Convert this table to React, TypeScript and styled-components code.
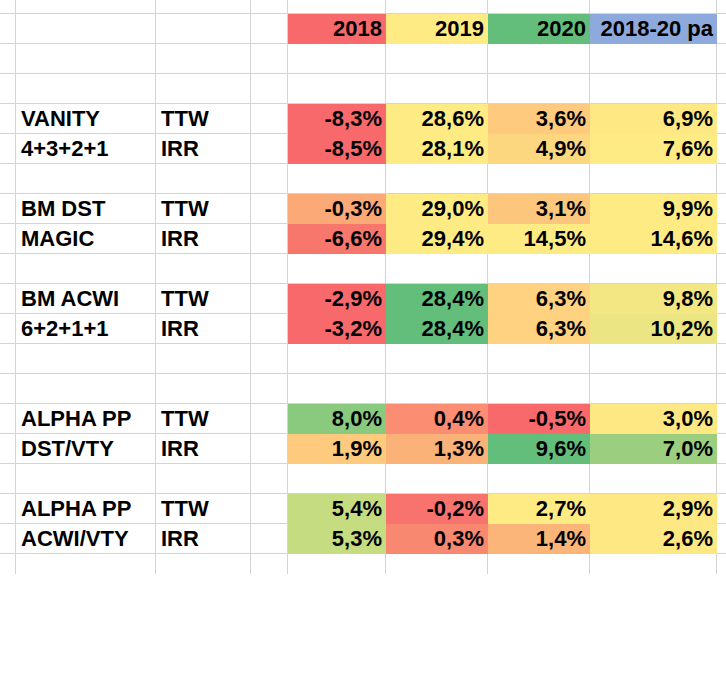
import React from 'react';
import styled, { createGlobalStyle } from 'styled-components';

const GlobalStyle = createGlobalStyle`
  html, body {
    margin: 0;
    padding: 0;
    background: #ffffff;
  }
`;

const GRID = '#d4d4d4';

const C = {
  red: '#f8696b',
  red2: '#f8736d',
  red3: '#f8776d',
  salmon: '#f98870',
  salmon2: '#fa8d72',
  orange: '#fba977',
  orange2: '#fbb279',
  orange3: '#fbb579',
  amber: '#fcc77d',
  amber2: '#fdca7e',
  amber3: '#fed280',
  amber4: '#fdd680',
  yellow: '#ffeb84',
  yellow2: '#fee883',
  yellowG: '#f3e783',
  yellowG2: '#ece583',
  lime: '#c5dd80',
  green: '#63be7b',
  green2: '#8aca7e',
  green3: '#9bcf7f',
  blue: '#8ea9db',
};

const Sheet = styled.div`
  display: grid;
  width: 726px;
  grid-template-columns: 16px 140px 95px 37px 98px 102px 102px 127px 9px;
  grid-template-rows: 14px repeat(18, 30px) 20px;
  font-family: 'Liberation Sans', Arial, sans-serif;
  font-weight: 700;
  font-size: 22px;
  color: #000;
  overflow: hidden;
`;

const Cell = styled.div<{ $fill?: string; $right?: boolean; $lastRow?: boolean; $lastCol?: boolean }>`
  box-sizing: border-box;
  display: flex;
  align-items: center;
  justify-content: ${(p) => (p.$right ? 'flex-end' : 'flex-start')};
  padding: ${(p) => (p.$right ? '0 3px 0 0' : '0 0 0 5px')};
  background: ${(p) => p.$fill ?? 'transparent'};
  border-right: ${(p) => (p.$lastCol ? 'none' : `1px solid ${p.$fill ?? GRID}`)};
  border-bottom: ${(p) => (p.$lastRow ? 'none' : `1px solid ${p.$fill ?? GRID}`)};
  white-space: nowrap;
  line-height: 22px;
  min-width: 0;
`;

type V = [string, string];
type Row =
  | { kind: 'empty' }
  | { kind: 'header' }
  | { kind: 'data'; name: string; type: string; values: V[] };

const HEADER: V[] = [
  ['2018', C.red],
  ['2019', C.yellow],
  ['2020', C.green],
  ['2018-20 pa', C.blue],
];

const E: Row = { kind: 'empty' };

const ROWS: Row[] = [
  E,
  { kind: 'header' },
  E,
  E,
  {
    kind: 'data',
    name: 'VANITY',
    type: 'TTW',
    values: [
      ['-8,3%', C.red],
      ['28,6%', C.yellow],
      ['3,6%', C.amber2],
      ['6,9%', C.yellow2],
    ],
  },
  {
    kind: 'data',
    name: '4+3+2+1',
    type: 'IRR',
    values: [
      ['-8,5%', C.red],
      ['28,1%', C.yellow],
      ['4,9%', C.amber4],
      ['7,6%', C.yellow],
    ],
  },
  E,
  {
    kind: 'data',
    name: 'BM DST',
    type: 'TTW',
    values: [
      ['-0,3%', C.orange],
      ['29,0%', C.yellow],
      ['3,1%', C.amber],
      ['9,9%', C.yellow],
    ],
  },
  {
    kind: 'data',
    name: 'MAGIC',
    type: 'IRR',
    values: [
      ['-6,6%', C.red3],
      ['29,4%', C.yellow],
      ['14,5%', C.yellow],
      ['14,6%', C.yellow],
    ],
  },
  E,
  {
    kind: 'data',
    name: 'BM ACWI',
    type: 'TTW',
    values: [
      ['-2,9%', C.red],
      ['28,4%', C.green],
      ['6,3%', C.amber3],
      ['9,8%', C.yellowG],
    ],
  },
  {
    kind: 'data',
    name: '6+2+1+1',
    type: 'IRR',
    values: [
      ['-3,2%', C.red],
      ['28,4%', C.green],
      ['6,3%', C.amber3],
      ['10,2%', C.yellowG2],
    ],
  },
  E,
  E,
  {
    kind: 'data',
    name: 'ALPHA PP',
    type: 'TTW',
    values: [
      ['8,0%', C.green2],
      ['0,4%', C.salmon2],
      ['-0,5%', C.red],
      ['3,0%', C.yellow2],
    ],
  },
  {
    kind: 'data',
    name: 'DST/VTY',
    type: 'IRR',
    values: [
      ['1,9%', C.amber2],
      ['1,3%', C.orange2],
      ['9,6%', C.green],
      ['7,0%', C.green3],
    ],
  },
  E,
  {
    kind: 'data',
    name: 'ALPHA PP',
    type: 'TTW',
    values: [
      ['5,4%', C.lime],
      ['-0,2%', C.red2],
      ['2,7%', C.yellow],
      ['2,9%', C.yellow2],
    ],
  },
  {
    kind: 'data',
    name: 'ACWI/VTY',
    type: 'IRR',
    values: [
      ['5,3%', C.lime],
      ['0,3%', C.salmon],
      ['1,4%', C.orange3],
      ['2,6%', C.yellow2],
    ],
  },
  E,
];

const NCOLS = 9;

function renderRow(row: Row, r: number, last: boolean) {
  const cells: React.ReactNode[] = [];
  const values: (V | null)[] =
    row.kind === 'header' ? HEADER : row.kind === 'data' ? row.values : [null, null, null, null];
  for (let c = 0; c < NCOLS; c++) {
    const lastCol = c === NCOLS - 1;
    const key = `${r}-${c}`;
    if (c === 1 && row.kind === 'data') {
      cells.push(
        <Cell key={key} $lastRow={last}>
          {row.name}
        </Cell>
      );
    } else if (c === 2 && row.kind === 'data') {
      cells.push(
        <Cell key={key} $lastRow={last}>
          {row.type}
        </Cell>
      );
    } else if (c >= 4 && c <= 7 && values[c - 4]) {
      const [txt, fill] = values[c - 4] as V;
      cells.push(
        <Cell key={key} $right $fill={fill} $lastRow={last}>
          {txt}
        </Cell>
      );
    } else {
      cells.push(<Cell key={key} $lastRow={last} $lastCol={lastCol} />);
    }
  }
  return cells;
}

export default function App() {
  return (
    <>
      <GlobalStyle />
      <Sheet>{ROWS.map((row, r) => renderRow(row, r, r === ROWS.length - 1))}</Sheet>
    </>
  );
}
